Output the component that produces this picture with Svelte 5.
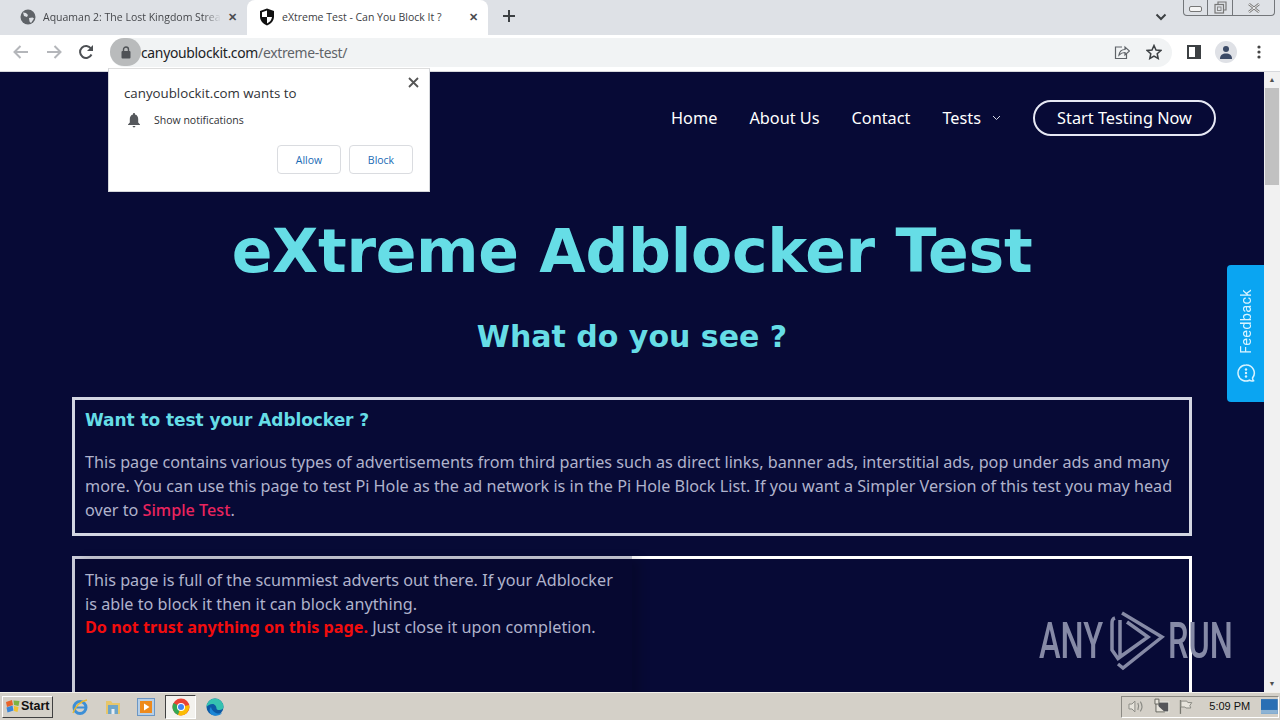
<script>
	const nav = ['Home', 'About Us', 'Contact'];
</script>

<div class="screen">
	<div class="tabstrip">
		<div class="tab">
			<svg width="16" height="16" viewBox="0 0 16 16"><circle cx="8" cy="8" r="7.500" fill="#5f6368"/><path d="M3 3.500l3 .5 2 2-1 2-3-1zM9 9l3.500-.5 1.500 1-3 4.500-1.500-1.500z" fill="#dee1e6"/></svg>
			<span class="tab-title fade">Aquaman 2: The Lost Kingdom Strea</span>
			<span class="tab-x">✕</span>
		</div>
		<div class="tab active">
			<svg width="16" height="18" viewBox="0 0 16 18"><path d="M8 .5l7 2.500v5.500c0 4-3 7.500-7 9-4-1.500-7-5-7-9V3z" fill="#111"/><path d="M8 2.500v6.500h5c-.3 3-2.300 5.200-5 6.500V9H3V4.300z" fill="#fff"/></svg>
			<span class="tab-title">eXtreme Test - Can You Block It ?</span>
			<span class="tab-x">✕</span>
		</div>
		<svg class="plus" width="14" height="14" viewBox="0 0 14 14"><path d="M7 1v12M1 7h12" stroke="#3c4043" stroke-width="2"/></svg>
		<span class="spring"></span>
		<svg class="chev" width="12" height="8" viewBox="0 0 12 8"><path d="M1.500 1.500L6 6l4.500-4.500" fill="none" stroke="#3c4043" stroke-width="2"/></svg>
		<div class="winbtns">
			<span class="wb"><i class="min"></i></span>
			<span class="wb mid">
				<svg width="13" height="13" viewBox="0 0 13 13"><path d="M4 3V1h8v8h-2" fill="none" stroke="#777" stroke-width="1.200"/><rect x="1" y="3.500" width="8.500" height="8.500" fill="none" stroke="#777" stroke-width="1.200"/><rect x="3.500" y="6" width="3.500" height="3.500" fill="none" stroke="#888"/></svg>
			</span>
			<span class="wb close">
				<svg width="14" height="10" viewBox="0 0 14 10"><path d="M2 1l10 8M12 1L2 9" stroke="#777" stroke-width="2.500"/><path d="M2 1l10 8M12 1L2 9" stroke="#f4f4f4" stroke-width="1"/></svg>
			</span>
		</div>
	</div>

	<div class="toolbar">
		<svg width="18" height="16" viewBox="0 0 18 16"><path d="M16 8H3M8.500 2L2.500 8l6 6" fill="none" stroke="#b4b6ba" stroke-width="2"/></svg>
		<svg class="fwd" width="18" height="16" viewBox="0 0 18 16"><path d="M2 8h13M9.500 2l6 6-6 6" fill="none" stroke="#b4b6ba" stroke-width="2"/></svg>
		<svg class="reload" width="16" height="16" viewBox="0 0 16 16"><path d="M13.500 10.500A6 6 0 1 1 13 4.500" fill="none" stroke="#4d5054" stroke-width="2"/><path d="M15 1v6H9z" fill="#4d5054"/></svg>
		<div class="omnibox">
			<span class="lockpill">
				<svg width="10" height="13" viewBox="0 0 10 13"><path d="M2.500 6V3.500a2.500 2.500 0 0 1 5 0V6" fill="none" stroke="#4f5256" stroke-width="1.400"/><rect x="0.500" y="5" width="9" height="7.500" rx="1" fill="#4f5256"/></svg>
			</span>
			<span class="url">canyoublockit.com<span class="path">/extreme-test/</span></span>
			<span class="spring"></span>
			<svg class="share" width="16" height="16" viewBox="0 0 16 16"><path d="M8 3H1.500v11.500h11V10" fill="none" stroke="#5f6368" stroke-width="1.200"/><path d="M5 11c.5-3.500 3-5.500 6-5.500V3l4.500 4-4.500 4V8.500c-2.500 0-4.500 1-6 2.500z" fill="none" stroke="#5f6368" stroke-width="1.200"/></svg>
			<svg class="star" width="16" height="16" viewBox="0 0 16 16"><path d="M8 1.500l2 4.500 4.800.5-3.600 3.200 1 4.800L8 12l-4.200 2.500 1-4.800L1.200 6.500 6 6z" fill="none" stroke="#3c4043" stroke-width="1.500"/></svg>
		</div>
		<svg class="side" width="14" height="14" viewBox="0 0 14 14"><rect x="1" y="1" width="12" height="12" fill="none" stroke="#3c4043" stroke-width="2"/><rect x="8" y="1" width="5" height="12" fill="#3c4043"/></svg>
		<span class="avatar">
			<svg width="14" height="14" viewBox="0 0 14 14"><circle cx="7" cy="4" r="3" fill="#3b4a66"/><path d="M1 14c0-4 2.500-5.500 6-5.500S13 10 13 14z" fill="#3b4a66"/></svg>
		</span>
		<svg class="kebab" width="4" height="14" viewBox="0 0 4 14"><circle cx="2" cy="2" r="1.600" fill="#444"/><circle cx="2" cy="7" r="1.600" fill="#444"/><circle cx="2" cy="12" r="1.600" fill="#444"/></svg>
	</div>

	<div class="viewport">
		<main class="page">
			<header class="site-head">
				<nav class="menu">
					{#each nav as item}
						<span>{item}</span>
					{/each}
					<span class="tests">Tests
						<svg width="9" height="6" viewBox="0 0 9 6"><path d="M1 1l3.500 3.500L8 1" fill="none" stroke="#d5d8e6" stroke-width="1"/></svg>
					</span>
					<span class="cta">Start Testing Now</span>
				</nav>
			</header>

			<h1>eXtreme Adblocker Test</h1>
			<h2>What do you see ?</h2>

			<section class="box first">
				<h3>Want to test your Adblocker ?</h3>
				<p>This page contains various types of advertisements from third parties such as direct links, banner ads, interstitial ads, pop under ads and many more. You can use this page to test Pi Hole as the ad network is in the Pi Hole Block List. If you want a Simpler Version of this test you may head over to <a href="#simple">Simple Test</a>.</p>
			</section>

			<section class="box second">
				<div class="col">
					<p>This page is full of the scummiest adverts out there. If your Adblocker is able to block it then it can block anything.<br /><strong>Do not trust anything on this page.</strong> Just close it upon completion.</p>
				</div>
			</section>

			<div class="feedback">
				<span class="fb-text">Feedback</span>
				<svg width="20" height="20" viewBox="0 0 20 20"><path d="M10 2a8 8 0 1 0 3.500 15.200c1.200.8 2.800 1 4 .5-.8-.8-1-1.800-1-2.700A8 8 0 0 0 10 2z" fill="none" stroke="#d8f3ff" stroke-width="1.500"/><circle cx="10" cy="6.500" r="1.200" fill="#d8f3ff"/><circle cx="10" cy="10" r="1.200" fill="#d8f3ff"/><circle cx="10" cy="13.500" r="1.200" fill="#d8f3ff"/></svg>
			</div>

			<div class="watermark">
				<span class="wm-any">ANY</span>
				<svg class="wm-logo" width="55" height="62" viewBox="0 0 55 62"><path d="M5 8C2 9 2 11 2 14v26l7 10M10 10v37l28-20-21-15M12 3l40 24-39 31-5-4" fill="none" stroke="#868aa6" stroke-width="3.500"/></svg>
				<span class="wm-run">RUN</span>
			</div>
		</main>

		<div class="scrollbar">
			<span class="arrow">▲</span>
			<span class="thumb"></span>
			<span class="spring"></span>
			<span class="arrow">▼</span>
		</div>

		<div class="permission">
			<button class="perm-x" aria-label="Close">
				<svg width="11" height="11" viewBox="0 0 11 11"><path d="M1 1l9 9M10 1l-9 9" stroke="#555" stroke-width="1.800"/></svg>
			</button>
			<div class="perm-title">canyoublockit.com wants to</div>
			<div class="perm-row">
				<svg width="14" height="16" viewBox="0 0 14 16"><path d="M7 1c-.6 0-1 .4-1 1v.6C3.800 3.100 2.800 5 2.800 7v3.500L1 12.500v.5h12v-.5l-1.800-2V7c0-2-1-3.900-3.200-4.400V2c0-.6-.4-1-1-1zM5.600 14a1.400 1.400 0 0 0 2.800 0z" fill="#55585c"/></svg>
				<span>Show notifications</span>
			</div>
			<div class="perm-actions">
				<span class="perm-btn">Allow</span>
				<span class="perm-btn">Block</span>
			</div>
		</div>
	</div>

	<footer class="taskbar">
		<div class="start">
			<svg width="16" height="15" viewBox="0 0 16 15"><path d="M1 3l6-2 1 5-6 2z" fill="#e8642a"/><path d="M8.500 1.500l6 .5-1 5-4.500-1z" fill="#7cb342"/><path d="M1.500 8.500l6-2 1 5-6 2z" fill="#3a86d8"/><path d="M9 7l4.500 1-1 5-3.500-1z" fill="#f2c230"/></svg>
			<b>Start</b>
		</div>
		<div class="quick">
			<svg width="18" height="18" viewBox="0 0 18 18"><circle cx="9" cy="9.500" r="6" fill="none" stroke="#3d8fd6" stroke-width="3"/><path d="M4 9.500h10" stroke="#3d8fd6" stroke-width="2"/><path d="M2 15c3-8 9-12 14-13" fill="none" stroke="#e9b92f" stroke-width="1.400"/></svg>
			<svg width="18" height="18" viewBox="0 0 18 18"><path d="M2 3h5l1.500 2H16v11H2z" fill="#e7c66a"/><rect x="4" y="7" width="10" height="9" fill="#6ea5c8"/><rect x="7.500" y="11" width="3" height="5" fill="#e9eef2"/></svg>
			<svg width="18" height="18" viewBox="0 0 18 18"><rect x="0.500" y="0.500" width="17" height="17" fill="#b7cfe6" stroke="#6b96c4"/><rect x="3" y="3" width="12" height="12" fill="#ee8a1c"/><path d="M7 5.500L12.500 9 7 12.500z" fill="#fff"/></svg>
			<span class="chrome-slot">
				<svg width="18" height="18" viewBox="0 0 18 18"><circle cx="9" cy="9" r="8.500" fill="#ea4335"/><path d="M9 9L1.500 5A8.500 8.500 0 0 0 6 17z" fill="#34a853"/><path d="M9 9l8 -2A8.500 8.500 0 0 1 6 17z" fill="#fbbc05"/><circle cx="9" cy="9" r="4" fill="#fff"/><circle cx="9" cy="9" r="3" fill="#4285f4"/></svg>
			</span>
			<svg width="18" height="18" viewBox="0 0 18 18"><circle cx="9" cy="9" r="8.500" fill="#0c59a4"/><path d="M.5 9A8.500 8.500 0 0 1 17.500 9c0 2-2 3-4 3-1.500 0-3-.5-3-1.500 0-2-1.500-4.500-4-4.500S1.500 7.500.5 9z" fill="#35c1b0"/><path d="M6 17c-3-2-3-6-1-8 1 4 5 8 11 6-2 2.500-6 3.500-10 2z" fill="#1b86d6"/></svg>
		</div>
		<span class="spring"></span>
		<div class="tray">
			<svg width="17" height="15" viewBox="0 0 17 15"><path d="M1 5h3l3-3v11L4 10H1z" fill="#e7e4dc" stroke="#8c8c86"/><path d="M10 4c1 2 1 5 0 7M12.500 2.500c2 3 2 7 0 10" fill="none" stroke="#8c8c86" stroke-width="1.200"/></svg>
			<svg width="17" height="17" viewBox="0 0 17 17"><rect x="5" y="4" width="11" height="10" fill="#55565a" stroke="#e8e8e0"/><path d="M2 1h4v5H2zM3 6v8h9" fill="#e7e4dc" stroke="#66665f"/></svg>
			<svg width="16" height="16" viewBox="0 0 16 16"><path d="M2.500 1v14" stroke="#77776f" stroke-width="1.300"/><path d="M3 2h6l1 1.500h4l-2 3 1 2.500H8L7 8H3z" fill="#e7e4dc" stroke="#8a8a83"/></svg>
			<span class="clock">5:09 PM</span>
			<svg class="desk" width="17" height="15" viewBox="0 0 17 15"><rect width="17" height="15" fill="#2a6fb4"/><rect y="11" width="17" height="4" fill="#8db3d4"/></svg>
		</div>
	</footer>
</div>

<style>
	:global(body) {
		margin: 0;
		overflow: hidden;
	}

	.screen {
		width: 1280px;
		height: 720px;
		display: flex;
		flex-direction: column;
		overflow: hidden;
		font-family: 'Noto Sans', sans-serif;
	}

	.spring {
		flex: 1;
	}

	/* browser chrome */
	.tabstrip {
		height: 35px;
		flex: none;
		display: flex;
		align-items: center;
		padding-left: 8px;
		background: #dee1e6;
		font-family: 'Open Sans', sans-serif;
	}

	.tab {
		width: 239px;
		height: 35px;
		box-sizing: border-box;
		display: flex;
		align-items: center;
		padding: 0 0 2px 12px;
		font-size: 10.500px;
		color: #45474b;
	}

	.tab.active {
		width: 241px;
		background: #fff;
		border-radius: 8px 8px 0 0;
		color: #3c4043;
	}

	.tab-title {
		margin-left: 7px;
		width: 178px;
		white-space: nowrap;
		overflow: hidden;
	}

	.tab.active .tab-title {
		width: 180px;
	}

	.tab-title.fade {
		-webkit-mask-image: linear-gradient(90deg, #000 90%, transparent);
		mask-image: linear-gradient(90deg, #000 90%, transparent);
	}

	.tab-x {
		margin-left: 7px;
		font-size: 11px;
		font-weight: 700;
		color: #4a4c50;
		width: 12px;
	}

	.plus {
		margin: 0 0 3px 14px;
	}

	.chev {
		margin-right: 16px;
		margin-bottom: 2px;
	}

	.winbtns {
		align-self: flex-start;
		display: flex;
		width: 92px;
		height: 16px;
		margin-right: 5px;
		box-sizing: border-box;
		border: 1px solid #73767a;
		border-top: 0;
		border-radius: 0 0 4px 4px;
	}

	.wb {
		flex: 1;
		display: flex;
		align-items: center;
		justify-content: center;
	}

	.wb.mid {
		border: solid #73767a;
		border-width: 0 1px;
		flex: 0 0 24px;
	}

	.wb.close {
		flex: 0 0 41px;
	}

	.wb .min {
		display: block;
		width: 11px;
		height: 4px;
		margin-top: 3px;
		border: 1px solid #777;
		border-radius: 2px;
		background: #f4f4f4;
	}

	.toolbar {
		height: 37px;
		flex: none;
		box-sizing: border-box;
		display: flex;
		align-items: center;
		padding: 0 0 2px 12px;
		background: #fff;
		border-bottom: 1px solid #d6d8dc;
	}

	.fwd {
		margin-left: 15px;
	}

	.reload {
		margin-left: 15px;
	}

	.omnibox {
		width: 1062px;
		height: 29px;
		margin-left: 16px;
		display: flex;
		align-items: center;
		border-radius: 15px;
		background: #f1f3f4;
	}

	.lockpill {
		width: 31px;
		height: 28px;
		flex: none;
		display: flex;
		align-items: center;
		justify-content: center;
		border-radius: 14px;
		background: #b9bbbc;
	}

	.url {
		font-size: 13.900px;
		letter-spacing: -0.3px;
		color: #202124;
	}

	.path {
		color: #5f6368;
	}

	.share {
		margin-right: 16px;
	}

	.star {
		margin-right: 10px;
	}

	.side {
		margin-left: 15px;
	}

	.avatar {
		width: 22px;
		height: 22px;
		margin-left: 14px;
		display: flex;
		align-items: center;
		justify-content: center;
		border-radius: 50%;
		background: #dfe1e6;
	}

	.kebab {
		margin-left: 20px;
	}

	/* page */
	.viewport {
		position: relative;
		flex: 1;
		min-height: 0;
		display: flex;
		background: #070a36;
	}

	.page {
		position: relative;
		flex: 1;
		min-width: 0;
		overflow: hidden;
		background: #070a36;
	}

	.site-head {
		height: 92px;
		display: flex;
		align-items: flex-end;
		justify-content: flex-end;
		box-sizing: border-box;
		padding: 0 48px 28px 0;
	}

	.menu {
		display: flex;
		align-items: center;
		gap: 32px;
		font-size: 16.300px;
		color: #fff;
	}

	.tests {
		display: inline-flex;
		align-items: center;
		gap: 11px;
	}

	.cta {
		width: 183px;
		height: 36px;
		box-sizing: border-box;
		display: flex;
		align-items: center;
		justify-content: center;
		border: 2px solid #e6e8f4;
		border-radius: 18px;
	}

	h1 {
		margin: 50px 0 0;
		text-align: center;
		white-space: nowrap;
		font: 700 60px/75px 'DejaVu Sans', sans-serif;
		letter-spacing: -0.300px;
		color: #66dde6;
	}

	h2 {
		margin: 29px 0 0;
		text-align: center;
		font: 700 30px/37px 'DejaVu Sans', sans-serif;
		color: #66dde6;
	}

	.box {
		box-sizing: border-box;
		width: 1120px;
		margin-left: 72px;
		border: 3px solid #d3d6e2;
	}

	.first {
		height: 139px;
		margin-top: 42px;
		padding: 8px 10px 0;
	}

	.first h3 {
		margin: 0;
		font: 700 17px/24px 'DejaVu Sans', sans-serif;
		letter-spacing: -0.070px;
		color: #66dde6;
	}

	.box p {
		margin: 0;
		font-size: 16.190px;
		line-height: 24px;
		color: #b0b3cc;
	}

	.first p {
		margin-top: 18px;
	}

	.first a {
		color: #e9245e;
		text-decoration: none;
		font-weight: 500;
	}

	.second {
		height: 180px;
		margin-top: 20px;
		border-image: linear-gradient(90deg, #c9cbd8 50%, #fff 50%) 3;
	}

	.col {
		width: 557px;
		height: 100%;
		box-sizing: border-box;
		padding: 10px 10px 0;
		background: #060830;
		box-shadow: 8px 0 10px rgba(0, 0, 0, 0.18);
	}

	.col p {
		line-height: 23.500px;
	}

	.col strong {
		color: #f20d0d;
	}

	.feedback {
		position: absolute;
		right: 0;
		top: 193px;
		width: 37px;
		height: 137px;
		box-sizing: border-box;
		display: flex;
		flex-direction: column;
		align-items: center;
		justify-content: flex-end;
		gap: 9px;
		padding-bottom: 19px;
		border-radius: 4px 0 0 4px;
		background: #0aa5f2;
		color: #d8f3ff;
	}

	.fb-text {
		margin-left: 4px;
		writing-mode: vertical-rl;
		transform: rotate(180deg);
		font: 400 14.500px/1 Roboto, sans-serif;
		letter-spacing: 0.3px;
	}

	.watermark {
		position: absolute;
		left: 1039px;
		top: 538px;
		width: 192px;
		height: 62px;
		display: flex;
		align-items: center;
		font: 500 50px/62px Roboto, sans-serif;
		color: #868aa6;
	}

	.wm-any,
	.wm-run {
		display: block;
		width: 62px;
		white-space: nowrap;
		transform: scaleX(0.65);
		transform-origin: left center;
	}

	.wm-logo {
		margin-left: 9px;
		flex: none;
	}

	.wm-run {
		margin-left: 3px;
	}

	.scrollbar {
		width: 16px;
		flex: none;
		display: flex;
		flex-direction: column;
		align-items: center;
		background: #f1f1f1;
	}

	.arrow {
		height: 16px;
		font-size: 7px;
		line-height: 16px;
		color: #505050;
	}

	.thumb {
		width: 14px;
		height: 97px;
		background: #c1c1c1;
	}

	.permission {
		position: absolute;
		left: 108px;
		top: -4px;
		width: 322px;
		height: 124px;
		box-sizing: border-box;
		padding: 15px 16px 0 15px;
		background: #fff;
		border: 1px solid #d4d6da;
		border-top-color: #ddd;
		color: #303236;
		font-family: 'Open Sans', sans-serif;
	}

	.perm-x {
		position: absolute;
		right: 10px;
		top: 8px;
		padding: 0;
		border: 0;
		background: none;
		line-height: 0;
	}

	.perm-title {
		font-size: 13.300px;
		line-height: 18px;
	}

	.perm-row {
		display: flex;
		align-items: center;
		gap: 13px;
		margin: 10px 0 0 3px;
		font-size: 10.500px;
	}

	.perm-actions {
		display: flex;
		justify-content: flex-end;
		gap: 8px;
		margin-top: 17px;
	}

	.perm-btn {
		width: 64px;
		height: 29px;
		box-sizing: border-box;
		display: flex;
		align-items: center;
		justify-content: center;
		border: 1px solid #dadce0;
		border-radius: 4px;
		font-size: 10.500px;
		color: #1a6bb5;
	}

	/* windows taskbar */
	.taskbar {
		height: 28px;
		flex: none;
		display: flex;
		align-items: center;
		box-sizing: border-box;
		border-top: 1px solid #f2f0ea;
		background: #d4d0c8;
	}

	.start {
		width: 51px;
		height: 22px;
		margin-left: 2px;
		box-sizing: border-box;
		display: flex;
		align-items: center;
		padding-left: 2px;
		border: 1px solid;
		border-color: #fff #404040 #404040 #fff;
		font: 700 12.500px/1 'Liberation Sans', sans-serif;
		color: #111;
	}

	.quick {
		display: flex;
		align-items: center;
		margin-left: 18px;
		gap: 15px;
	}

	.chrome-slot {
		width: 31px;
		height: 24px;
		margin: 0 -5px;
		display: flex;
		align-items: center;
		justify-content: center;
		box-sizing: border-box;
		background: #f3f2ee;
		border: 1px solid;
		border-color: #404040 #fff #fff #404040;
	}

	.tray {
		width: 158px;
		height: 22px;
		margin-right: 1px;
		box-sizing: border-box;
		display: flex;
		align-items: center;
		gap: 8px;
		padding-left: 6px;
		border: 1px solid;
		border-color: #8c8a84 #fff #fff #8c8a84;
	}

	.clock {
		margin-left: 8px;
		white-space: nowrap;
		font: 400 11px/1 'Liberation Sans', sans-serif;
		color: #111;
	}

	.desk {
		margin-left: 3px;
	}
</style>
